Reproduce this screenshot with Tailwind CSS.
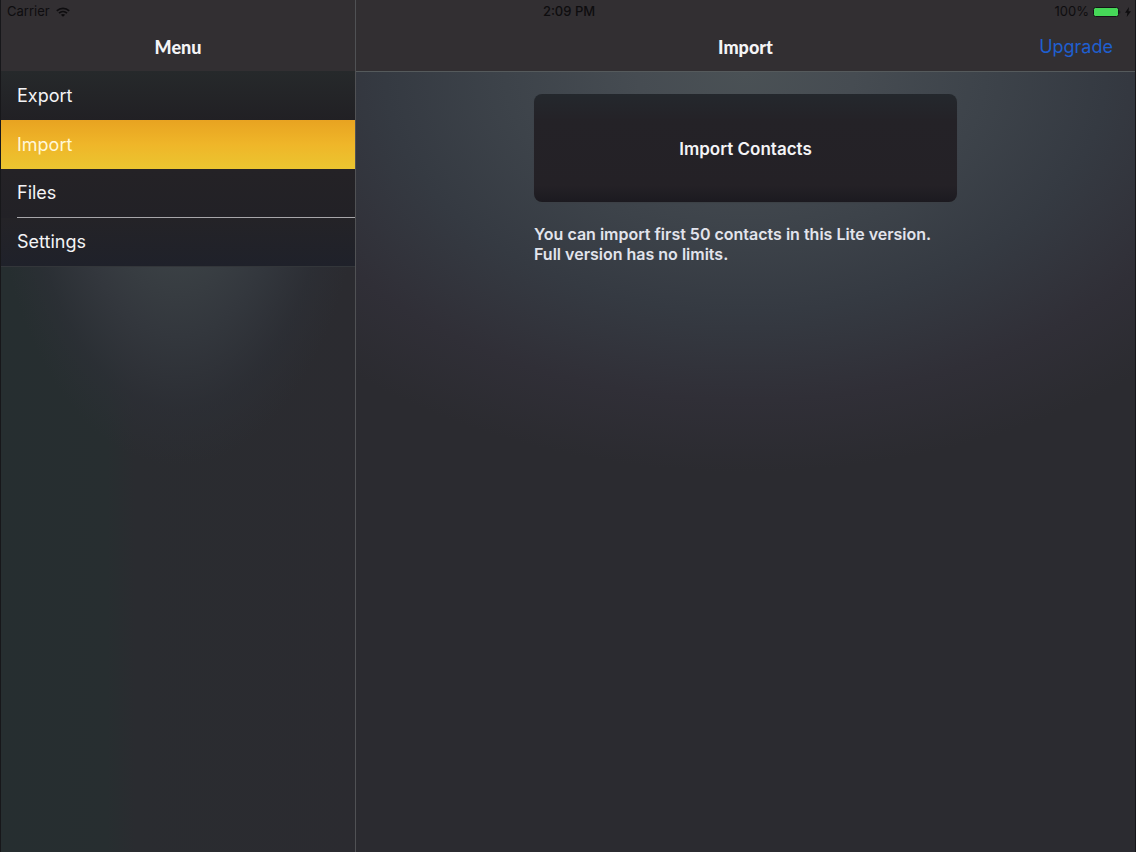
<!DOCTYPE html>
<html lang="en">
<head>
<meta charset="utf-8">
<meta name="viewport" content="width=device-width, initial-scale=1">
<title>Import</title>
<script src="https://cdn.jsdelivr.net/npm/@tailwindcss/browser@4"></script>
</head>
<body class="relative flex min-h-screen border-x border-[#17171a] bg-[#2b2b30] font-['Inter',sans-serif] text-[#f4f4f6]">
  <!-- Status bar spans both panes -->
  <div class="absolute inset-x-0 top-0 grid h-6 grid-cols-3 items-center pr-1 pl-1.5 text-[13px] text-[#0e0d0f]">
    <div class="flex items-center gap-1.5">
      <span>Carrier</span>
      <svg class="h-2.5 w-3.5" viewBox="0 0 14 10" fill="none" stroke="currentColor" stroke-width="1.7" aria-hidden="true">
        <path d="M.8 3.8C4.3.5 9.7.5 13.2 3.8"/><path d="M3 6.1c2.3-2.1 5.7-2.1 8 0"/><path d="M7 9.8 4.8 7.7c1.3-1.1 3.1-1.1 4.4 0Z" fill="currentColor" stroke="none"/>
      </svg>
    </div>
    <span class="text-center font-medium">2:09 PM</span>
    <div class="flex items-center justify-end gap-1">
      <span>100%</span>
      <svg class="h-2.5 w-7" viewBox="0 0 28 10" aria-hidden="true">
        <rect x=".5" y=".5" width="25" height="9" rx="2" fill="#46d858" stroke="#151417"/><path d="M26.4 3.2c1.2.5 1.2 3.1 0 3.6Z" fill="#151417"/>
      </svg>
      <svg class="h-2.5 w-1.5" viewBox="0 0 6 10" fill="currentColor" aria-hidden="true"><path d="M4 0 0 5.7h2.4L1.7 10 6 4.2H3.5Z"/></svg>
    </div>
  </div>

  <aside class="flex w-[355px] shrink-0 flex-col border-r border-[#505154] bg-[linear-gradient(90deg,#262e30_0%,#272e30_30%,#2a2c30_38%,#2b2b30_100%)]">
    <header class="flex h-[71px] items-end justify-center bg-[#322f32] pb-2.5">
      <h1 class="font-['Marker_Felt','Lato',sans-serif] text-lg leading-7 font-black">Menu</h1>
    </header>
    <nav class="flex flex-1 flex-col bg-[radial-gradient(ellipse_185px_325px_at_50%_70px,#454c50_0%,#3b4145_35%,#33373d_60%,#2d303799_82%,#2b2b3000_100%)] text-lg">
      <a href="#export" class="flex h-[49px] items-center bg-linear-to-b from-[#26292b] to-[#212024] px-4">Export</a>
      <a href="#import" aria-current="page" class="flex h-[49px] items-center bg-linear-to-b from-[#e8a321] via-[#efb629] to-[#ebc530] px-4 text-[#fff8d8]">Import</a>
      <a href="#files" class="flex h-[49px] flex-col bg-linear-to-b from-[#242226] to-[#222126] pl-4"><span class="flex flex-1 items-center border-b border-[#a7a6aa]">Files</span></a>
      <a href="#settings" class="flex h-[49px] items-center border-b border-[#33363a] bg-linear-to-b from-[#242327] to-[#1f212a] px-4">Settings</a>
    </nav>
  </aside>

  <div class="flex min-w-0 flex-1 flex-col">
    <header class="grid h-[72px] grid-cols-3 items-end border-b border-[#555a5c] bg-[#322f32] px-[22px] pb-2.5">
      <h2 class="col-start-2 text-center font-['Marker_Felt','Lato',sans-serif] text-lg leading-7 font-black">Import</h2>
      <a href="#upgrade" class="justify-self-end text-lg leading-7 text-[#1f5fd0]">Upgrade</a>
    </header>
    <main class="flex-1 bg-[radial-gradient(ellipse_600px_400px_at_50%_0px,#4a5155_0%,#464c52_18%,#3d434a_40%,#353a42_60%,#302f37_82%,#2b2b3000_100%)] px-[178px] pt-[22px]">
      <button type="button" class="h-27 w-full rounded-lg bg-[linear-gradient(180deg,#24282d_0%,#242227_25%,#242126_85%,#1c1a20_100%)] pt-1 text-[17px] font-semibold shadow-[0_1px_1px_#3c4146]">Import Contacts</button>
      <p class="mt-[22px] text-base leading-5 font-semibold text-[#e2e4ec]">You can import first 50 contacts in this Lite version.<br>Full version has no limits.</p>
    </main>
  </div>
</body>
</html>
